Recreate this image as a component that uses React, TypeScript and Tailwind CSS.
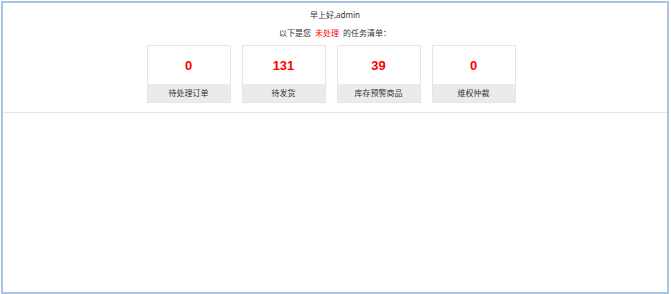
import React from "react";

const cards = [
  { n: "0", label: "待处理订单" },
  { n: "131", label: "待发货" },
  { n: "39", label: "库存预警商品" },
  { n: "0", label: "维权仲裁" },
];

export default function App() {
  return (
    <div className="w-[671px] h-[294px] bg-white pt-[1px] pl-[1px]">
      <div
        className="w-[668px] h-[293px] border-2 border-[#a9c4e4] bg-white text-[#333]"
        style={{ fontFamily: '"Noto Sans", "Noto Sans CJK SC", sans-serif' }}
      >
        <div className="pt-[7px] text-center text-[8px] leading-[10px]">早上好,admin</div>
        <div className="mt-[8px] text-center text-[8px] leading-[10px]">
          以下是您<span className="mx-[4px] text-[#ff0000]">未处理</span>的任务清单：
        </div>
        <div className="mt-[7px] flex justify-center gap-[11px] pr-[8px]">
          {cards.map((c, i) => (
            <div key={i} className="w-[84px] border border-[#e6e6e6] bg-white">
              <div
                className="h-[38px] pt-[1px] flex items-center justify-center text-[13px] font-bold text-[#ff0000]"
                style={{ fontFamily: '"Liberation Sans", Arial, sans-serif' }}
              >
                {c.n}
              </div>
              <div className="h-[18px] flex items-center justify-center bg-[#ebebeb] text-[8px] text-[#333]">
                {c.label}
              </div>
            </div>
          ))}
        </div>
        <div className="mt-[9px] border-t border-[#e5e5e5]" />
      </div>
    </div>
  );
}
